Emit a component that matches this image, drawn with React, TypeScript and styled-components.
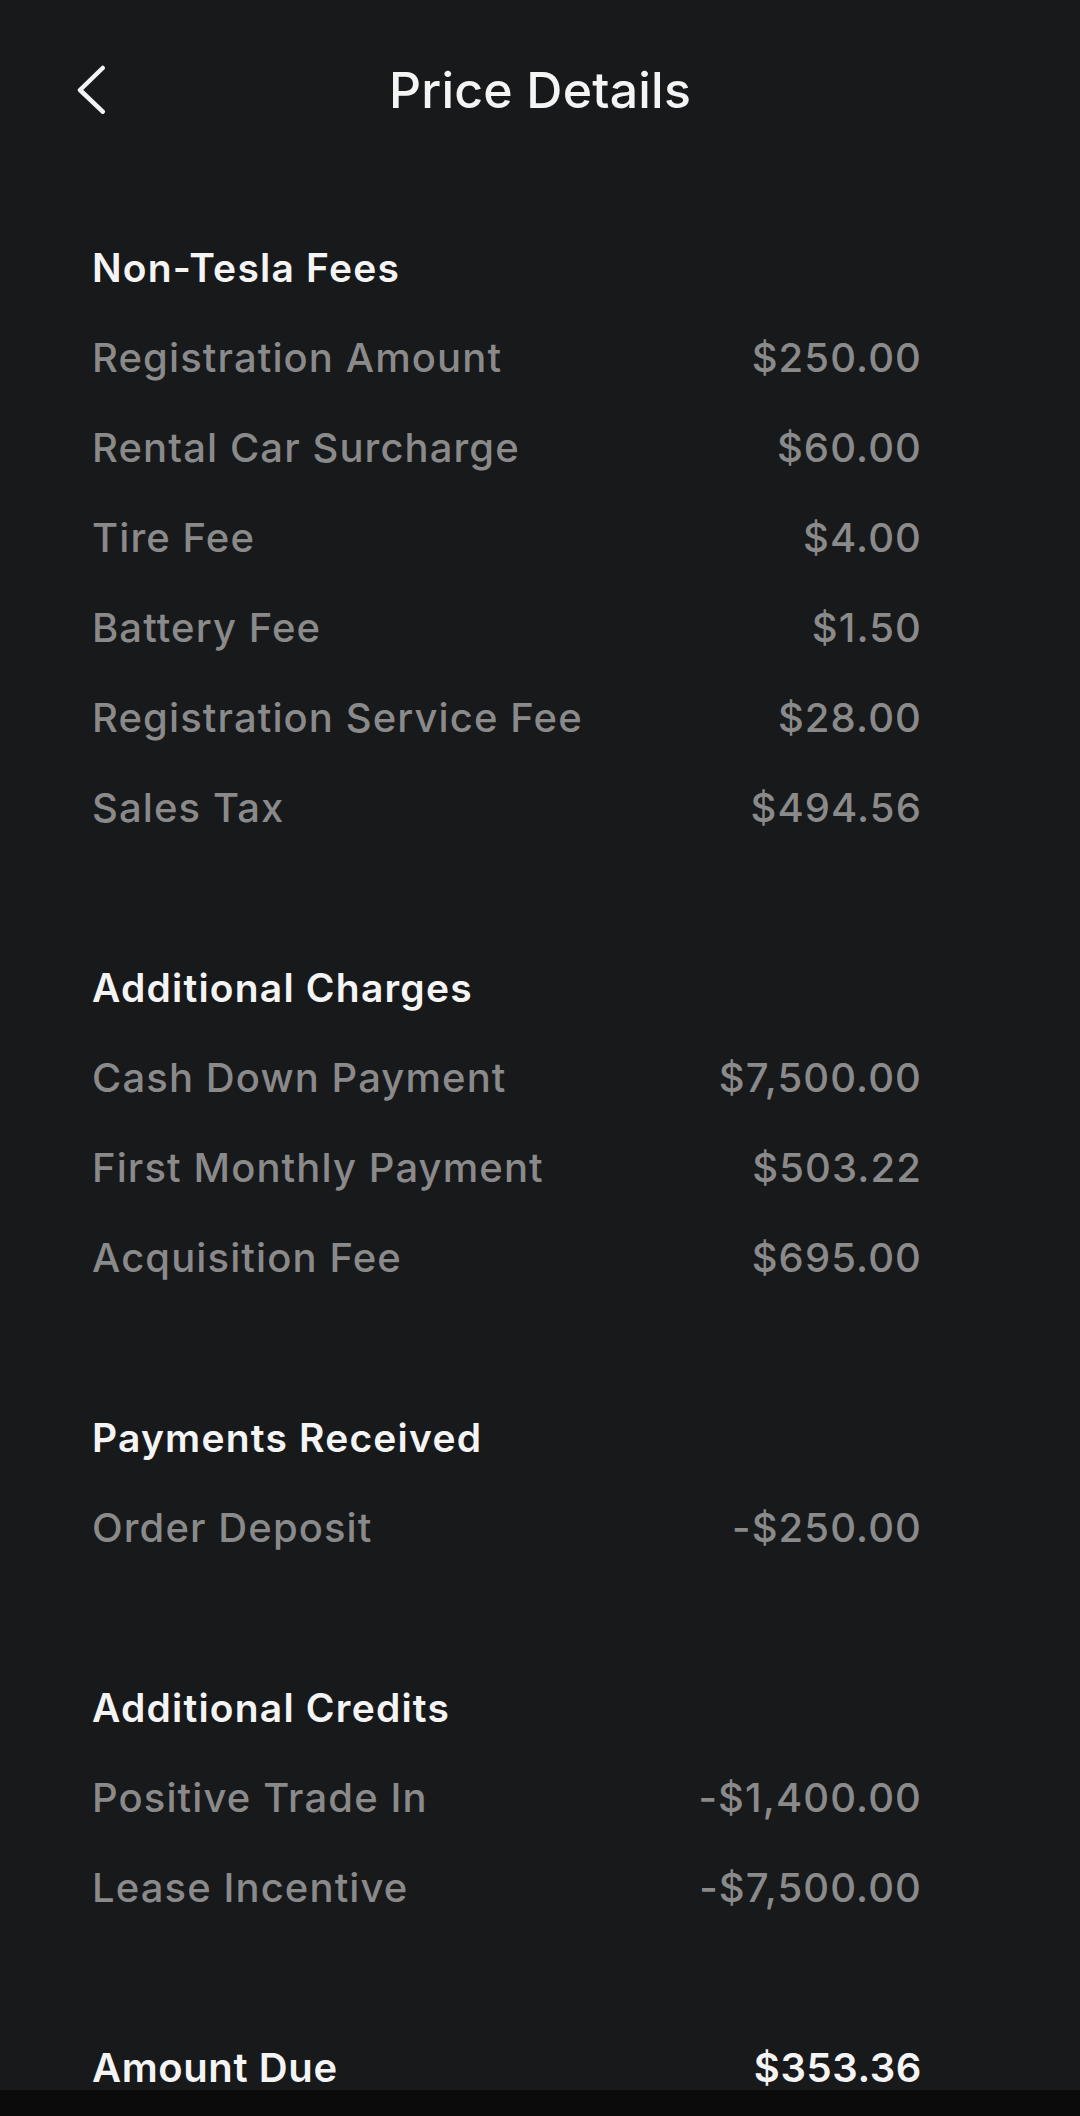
import React from "react";
import styled, { createGlobalStyle } from "styled-components";

const GlobalStyle = createGlobalStyle`
  html, body {
    margin: 0;
    padding: 0;
    background: #18191b;
  }
  body {
    font-family: Inter, "Noto Sans", "Liberation Sans", sans-serif;
    -webkit-font-smoothing: antialiased;
  }
`;

const Page = styled.div`
  width: 1080px;
  min-height: 2116px;
  background: #18191b;
  display: flex;
  flex-direction: column;
  overflow: hidden;
`;

const Header = styled.header`
  height: 180px;
  display: grid;
  grid-template-columns: 1fr auto 1fr;
  align-items: center;
  padding: 0 76px;
  box-sizing: border-box;
`;

const BackButton = styled.button`
  justify-self: start;
  align-self: start;
  margin-top: 64px;
  width: 30px;
  height: 50px;
  padding: 0;
  border: none;
  background: transparent;
  display: flex;
  cursor: pointer;
`;

const Title = styled.h1`
  margin: 0;
  font-size: 50px;
  font-weight: 500;
  color: #f4f4f4;
  letter-spacing: 0.2px;
  line-height: normal;
`;

const Content = styled.main`
  display: flex;
  flex-direction: column;
  gap: 90px;
  padding: 43px 158px 0 92px;
`;

const Section = styled.section`
  display: flex;
  flex-direction: column;
`;

const Line = styled.div<{ $strong?: boolean }>`
  height: 90px;
  line-height: 90px;
  display: flex;
  justify-content: space-between;
  font-size: 40px;
  font-weight: ${(p) => (p.$strong ? 600 : 500)};
  letter-spacing: ${(p) => (p.$strong ? "0.6px" : "1.1px")};
  color: ${(p) => (p.$strong ? "#f4f4f4" : "#8a8a8b")};
  white-space: nowrap;
`;

const SectionTitle = styled.h2`
  margin: 0;
  height: 90px;
  line-height: 90px;
  font-size: 39px;
  font-weight: 600;
  letter-spacing: 1.2px;
  color: #f4f4f4;
`;

const NavBar = styled.div`
  position: fixed;
  left: 0;
  right: 0;
  bottom: 0;
  height: 26px;
  background: #0b0b0b;
`;

type Row = [string, string];
const sections: { title: string; rows: Row[] }[] = [
  {
    title: "Non-Tesla Fees",
    rows: [
      ["Registration Amount", "$250.00"],
      ["Rental Car Surcharge", "$60.00"],
      ["Tire Fee", "$4.00"],
      ["Battery Fee", "$1.50"],
      ["Registration Service Fee", "$28.00"],
      ["Sales Tax", "$494.56"],
    ],
  },
  {
    title: "Additional Charges",
    rows: [
      ["Cash Down Payment", "$7,500.00"],
      ["First Monthly Payment", "$503.22"],
      ["Acquisition Fee", "$695.00"],
    ],
  },
  {
    title: "Payments Received",
    rows: [["Order Deposit", "-$250.00"]],
  },
  {
    title: "Additional Credits",
    rows: [
      ["Positive Trade In", "-$1,400.00"],
      ["Lease Incentive", "-$7,500.00"],
    ],
  },
];

export default function App() {
  return (
    <Page>
      <GlobalStyle />
      <Header>
        <BackButton aria-label="Back">
          <svg width="30" height="50" viewBox="0 0 30 50" fill="none">
            <path
              d="M26.7 4 L4 26 L26.7 47.7"
              stroke="#f4f4f4"
              strokeWidth="4.5"
              strokeLinecap="round"
              strokeLinejoin="round"
            />
          </svg>
        </BackButton>
        <Title>Price Details</Title>
        <span />
      </Header>
      <Content>
        {sections.map((s) => (
          <Section key={s.title}>
            <SectionTitle>{s.title}</SectionTitle>
            {s.rows.map(([label, value]) => (
              <Line key={label}>
                <span>{label}</span>
                <span>{value}</span>
              </Line>
            ))}
          </Section>
        ))}
        <Section>
          <Line $strong>
            <span>Amount Due</span>
            <span>$353.36</span>
          </Line>
        </Section>
      </Content>
      <NavBar />
    </Page>
  );
}
